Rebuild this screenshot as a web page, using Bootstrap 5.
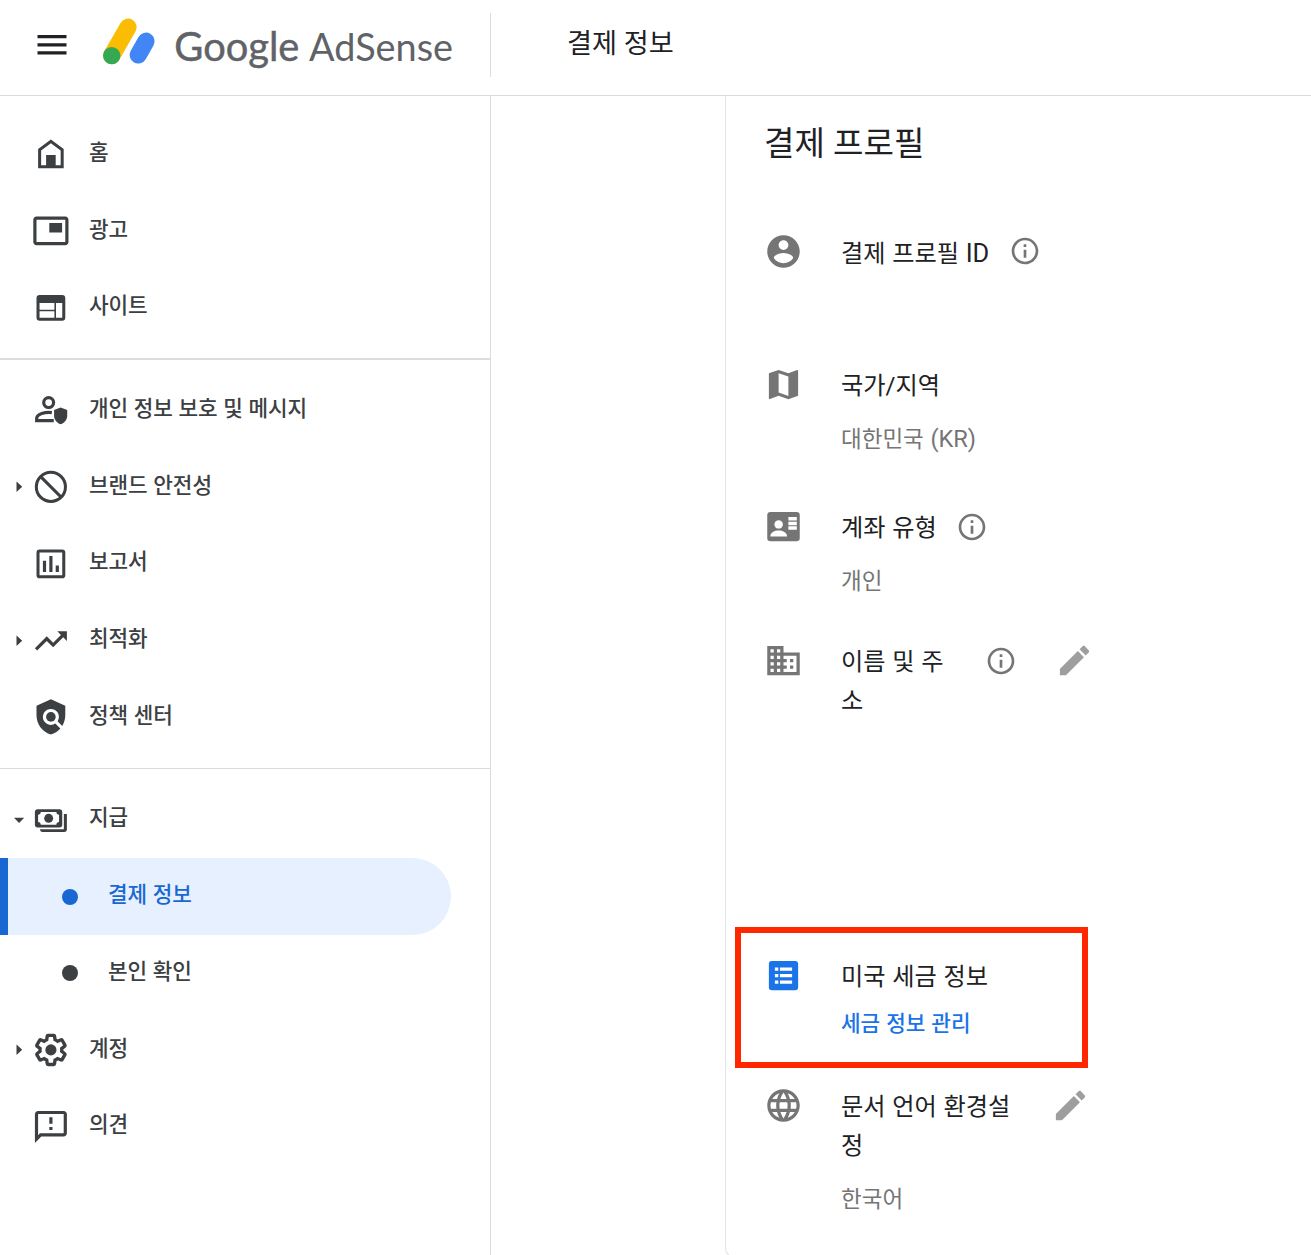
<!DOCTYPE html>
<html lang="ko">
<head>
<meta charset="utf-8">
<meta name="viewport" content="width=device-width, initial-scale=1">
<title>Google AdSense</title>
<link href="https://cdn.jsdelivr.net/npm/bootstrap@5.3.0/dist/css/bootstrap.min.css" rel="stylesheet">
<style>
body{font-family:Roboto,"Noto Sans CJK KR",sans-serif;color:#202124;background:#fff;height:1255px;overflow:hidden}
svg{display:block;flex:none}
.topbar{height:96px;border-bottom:1px solid #dadce0}
.brandbox{width:491px;height:64px;margin-top:13px;border-right:1px solid #dadce0}
.burger{margin:22px 0 0 37px}
.logo{margin:0 0 0 34px}
.page-name{font-size:27.2px;line-height:40px;margin:24px 0 0 76px}
.side{width:491px;height:1159px;border-right:1px solid #dadce0;padding-top:19.9px}
.side-link{height:76.8px;color:#3c4043;font-size:21.3px;line-height:32px;font-weight:500;word-spacing:.3px;padding-left:15px;text-decoration:none}
.side-link .caret{width:8px;height:12px;margin-right:8px}
.side-link svg.ico{width:38.4px;height:38.4px;margin-right:19.5px;transform:translate(.7px,-.3px)}
.side-link span{padding-bottom:3px}
.rule{height:1.6px;background:#dadce0;margin:12.1px 0 12px}
.rule-b{height:1px;background:#dadce0;margin:12px 0 12.4px}
.sub{padding-left:62px;width:451px}
.sub i{width:16px;height:16px;border-radius:50%;background:currentColor;margin-right:30px}
.sub.current{background:#e6f0fe;color:#1967d2;border-left:8px solid #1967d2;border-radius:0 38.4px 38.4px 0;padding-left:54px}
.gutter{width:234px}
.panel{border-left:1px solid #e4e5e8;border-bottom:1px solid #e4e5e8;border-bottom-left-radius:10px;height:1162px;padding:24px 0 0 38px}
.panel h1{font-size:33.1px;line-height:48px;font-weight:400;margin:0 0 64px}
.entry{height:133px;color:#757575;position:relative}
.entry>svg{width:39px;height:39px}
.entry .words{margin-left:38px;padding-top:2px}
.entry .lbl{font-size:24.2px;line-height:39px;color:#202124;word-break:break-all;word-spacing:.7px}
.entry .val{font-size:22.5px;line-height:32px;margin-top:16.5px;word-spacing:1px}
.entry .latin{font-size:1.05em}
.entry .act{font-size:21.3px;line-height:32px;font-weight:500;color:#1a73e8;text-decoration:none;display:block;margin-top:11px;word-spacing:.7px}
.entry svg.info{width:32px;height:32px;margin:4px 0 0 19.500px}
.entry:first-of-type svg.info{margin-top:3px}
.entry svg.pen{color:#9e9e9e;margin-left:38px}
.h-country{height:142px}.h-type{height:134px}.h-name{height:315px}.h-tax{height:130px}
.entry .w-name{width:112px}.w-lang{width:172px}
.entry .w-name-gap{margin-right:12.500px}
.h-tax>svg{color:#1a73e8}
.marker{position:absolute;left:-29px;top:-29px;width:353px;height:141px;border:6px solid #ff2600}
</style>
<script src="https://cdn.jsdelivr.net/npm/bootstrap@5.3.0/dist/js/bootstrap.bundle.min.js"></script>
</head>
<body>
<header class="topbar d-flex align-items-start">
  <div class="brandbox d-flex align-items-start">
    <svg class="burger" width="30" height="20" viewBox="0 0 30 20"><path d="M.5 0h29v3.200H.5zM.5 8.200h29v3.200H.5zM.5 16.200h29v3.200H.5z" fill="#202124"/></svg>
    <svg class="logo" width="356" height="64" viewBox="101 13 356 64">
      <path d="M128 27.200L111.700 55.600" stroke="#fbbc04" stroke-width="17.200" stroke-linecap="round"/>
      <path d="M146 41.200L138.200 55" stroke="#4285f4" stroke-width="17.200" stroke-linecap="round"/>
      <circle cx="111.700" cy="55.600" r="8.700" fill="#34a853"/>
      <g font-family="Lato, sans-serif" fill="#5f6368">
        <text x="174.300" y="60.500" font-size="41" textLength="125" lengthAdjust="spacingAndGlyphs" stroke="#5f6368" stroke-width=".5">Google</text>
        <text x="309" y="60.500" font-size="38.500" textLength="144" lengthAdjust="spacingAndGlyphs">AdSense</text>
      </g>
    </svg>
  </div>
  <div class="page-name">결제 정보</div>
</header>
<div class="d-flex">
  <nav class="side flex-shrink-0">
    <a class="side-link d-flex align-items-center"><b class="caret"></b><svg class="ico" viewBox="0 0 24 24" fill="currentColor"><path fill-rule="evenodd" d="M4 21V9l8-6 8 6v12zM5.900 19.100h12.200V9.900L12 5.400 5.900 9.900z"/><path d="M9 12.700h6v7H9z"/></svg><span>홈</span></a>
    <a class="side-link d-flex align-items-center"><b class="caret"></b><svg class="ico" viewBox="0 0 24 24" fill="currentColor"><path d="M19 7h-8v6h8V7zm2-4H3c-1.100 0-2 .9-2 2v14c0 1.100.9 1.980 2 1.980h18c1.100 0 2-.88 2-1.980V5c0-1.100-.9-2-2-2zm0 16.010H3V4.980h18v14.030z"/></svg><span>광고</span></a>
    <a class="side-link d-flex align-items-center"><b class="caret"></b><svg class="ico" viewBox="0 0 24 24" fill="currentColor"><path fill-rule="evenodd" d="M5 4h14a2 2 0 0 1 2 2v12a2 2 0 0 1-2 2H5a2 2 0 0 1-2-2V6a2 2 0 0 1 2-2zM4.900 9v4.200h9.300V9zM4.900 14.100v4.100h9.300v-4.100zM15.200 9v9.200h3.900V9z"/></svg><span>사이트</span></a>
    <div class="rule"></div>
    <a class="side-link d-flex align-items-center"><b class="caret"></b><svg class="ico" viewBox="0 0 24 24" fill="currentColor"><circle cx="10.600" cy="7.400" r="3.100" fill="none" stroke="currentColor" stroke-width="2"/><path d="M12.600 13.700c-4.200-.5-9.500.9-9.500 3.700v1.300h10.700" fill="none" stroke="currentColor" stroke-width="2"/><path d="M18.100 10.500l4.100 1.600v3.500c0 2.400-1.700 4.600-4.100 5.300-2.400-.7-4.100-2.900-4.100-5.300v-3.500z"/></svg><span>개인 정보 보호 및 메시지</span></a>
    <a class="side-link d-flex align-items-center"><svg class="caret" viewBox="0 0 8 12"><path d="M1.500.5v10.500L7.200 5.800z" fill="currentColor"/></svg><svg class="ico" viewBox="0 0 24 24" fill="none" stroke="currentColor" stroke-width="1.900"><circle cx="12" cy="12" r="9.100"/><path d="M5.600 5.600l12.800 12.800"/></svg><span>브랜드 안전성</span></a>
    <a class="side-link d-flex align-items-center"><b class="caret"></b><svg class="ico" viewBox="0 0 24 24" fill="currentColor"><rect x="3.950" y="3.950" width="16.100" height="16.100" rx="1" fill="none" stroke="currentColor" stroke-width="1.900"/><path d="M7 10h2v7H7zM11 7h2v10h-2zM15 13h2v4h-2z"/></svg><span>보고서</span></a>
    <a class="side-link d-flex align-items-center"><svg class="caret" viewBox="0 0 8 12"><path d="M1.500.5v10.500L7.200 5.800z" fill="currentColor"/></svg><svg class="ico" viewBox="0 0 24 24" fill="currentColor"><path d="M16 6l2.290 2.290-4.880 4.880-4-4L2 16.590 3.410 18l6-6 4 4 6.300-6.290L22 12V6z"/></svg><span>최적화</span></a>
    <a class="side-link d-flex align-items-center"><b class="caret"></b><svg class="ico" viewBox="0 0 24 24" fill="currentColor"><path d="M21 5l-9-4-9 4v6c0 5.550 3.840 10.740 9 12 2.300-.56 4.330-1.900 5.880-3.710l-3.120-3.120c-1.940 1.290-4.580 1.070-6.290-.64-1.950-1.950-1.950-5.120 0-7.070 1.950-1.950 5.120-1.950 7.070 0 1.710 1.710 1.920 4.350.64 6.290l2.900 2.900C20.290 15.690 21 13.380 21 11V5z"/><circle cx="12" cy="12" r="3"/></svg><span>정책 센터</span></a>
    <div class="rule-b"></div>
    <a class="side-link d-flex align-items-center"><svg class="caret overflow-visible" viewBox="0 0 8 12"><path d="M-1 3.800h10.200L4.100 8.900z" fill="currentColor"/></svg><svg class="ico" viewBox="0 0 24 24" fill="currentColor"><path fill-rule="evenodd" d="M3.600 5.300h13.900c.9 0 1.600.7 1.600 1.600v8.300c0 .9-.7 1.600-1.600 1.600H3.600c-.9 0-1.600-.7-1.600-1.600V6.900c0-.9.7-1.600 1.600-1.600zM5.700 7.100c0 1-.8 1.700-1.700 1.700v4.500c1 0 1.700.8 1.700 1.700h9.700c0-1 .8-1.700 1.700-1.700V8.800c-1 0-1.700-.8-1.700-1.700z"/><circle cx="10.600" cy="11" r="2.800"/><path d="M20.100 8.300H22v9.700c0 .9-.7 1.600-1.600 1.600H6.700c-.9 0-1.500-.7-1.500-1.700h14.900z"/></svg><span>지급</span></a>
    <a class="side-link sub current d-flex align-items-center"><i></i><span>결제 정보</span></a>
    <a class="side-link sub d-flex align-items-center"><i></i><span>본인 확인</span></a>
    <a class="side-link d-flex align-items-center"><svg class="caret" viewBox="0 0 8 12"><path d="M1.500.5v10.500L7.200 5.800z" fill="currentColor"/></svg><svg class="ico" viewBox="0 0 24 24" fill="currentColor"><path transform="translate(12 12) scale(.91) translate(-12 -12)" fill="none" stroke="currentColor" stroke-width="2.300" d="M19.430 12.980c.04-.32.07-.64.07-.98 0-.34-.03-.66-.07-.98l2.110-1.650c.19-.15.24-.42.12-.64l-2-3.460c-.09-.16-.26-.25-.44-.25-.06 0-.12.01-.17.03l-2.490 1c-.52-.4-1.080-.73-1.690-.98l-.38-2.650C14.460 2.180 14.250 2 14 2h-4c-.25 0-.46.18-.49.42l-.38 2.650c-.61.25-1.170.59-1.690.98l-2.490-1c-.06-.02-.12-.03-.18-.03-.17 0-.34.09-.43.25l-2 3.460c-.13.22-.07.49.12.64l2.110 1.650c-.04.32-.07.65-.07.98 0 .33.03.66.07.98l-2.110 1.650c-.19.15-.24.42-.12.64l2 3.460c.09.16.26.25.44.25.06 0 .12-.01.17-.03l2.490-1c.52.4 1.080.73 1.690.98l.38 2.650c.03.24.24.42.49.42h4c.25 0 .46-.18.49-.42l.38-2.650c.61-.25 1.170-.59 1.690-.98l2.490 1c.06.02.12.03.18.03.17 0 .34-.09.43-.25l2-3.460c.12-.22.07-.49-.12-.64z"/><circle cx="12" cy="12" r="3.500"/></svg><span>계정</span></a>
    <a class="side-link d-flex align-items-center"><b class="caret"></b><svg class="ico" viewBox="0 0 24 24" fill="currentColor"><path d="M20 2H4c-1.100 0-1.990.9-1.990 2L2 22l4-4h14c1.100 0 2-.9 2-2V4c0-1.100-.9-2-2-2zm0 14H5.170l-.59.59-.58.58V4h16v12zm-9-4h2v2h-2zm0-6h2v4h-2z"/></svg><span>의견</span></a>
  </nav>
  <div class="gutter flex-shrink-0"></div>
  <main class="panel flex-grow-1">
    <h1>결제 프로필</h1>
    <section class="entry d-flex align-items-start">
      <svg viewBox="0 0 24 24" fill="currentColor"><path d="M12 2C6.480 2 2 6.480 2 12s4.480 10 10 10 10-4.480 10-10S17.520 2 12 2zm0 3c1.660 0 3 1.340 3 3s-1.340 3-3 3-3-1.340-3-3 1.340-3 3-3zm0 14.200c-2.500 0-4.710-1.280-6-3.220.03-1.990 4-3.080 6-3.080 1.990 0 5.970 1.090 6 3.080-1.290 1.940-3.500 3.220-6 3.220z"/></svg>
      <div class="words"><div class="lbl">결제 프로필 <span class="latin">ID</span></div></div>
      <svg class="info" viewBox="0 0 24 24" fill="currentColor"><path d="M11 7h2v2h-2zm0 4h2v6h-2zm1-9C6.480 2 2 6.480 2 12s4.480 10 10 10 10-4.480 10-10S17.520 2 12 2zm0 18c-4.410 0-8-3.590-8-8s3.590-8 8-8 8 3.590 8 8-3.590 8-8 8z"/></svg>
    </section>
    <section class="entry h-country d-flex align-items-start">
      <svg viewBox="0 0 24 24" fill="currentColor"><path d="M20.500 3l-.16.03L15 5.100 9 3 3.360 4.900c-.21.07-.36.25-.36.48V20.500c0 .28.22.5.5.5l.16-.03L9 18.900l6 2.100 5.640-1.900c.21-.07.36-.25.36-.48V3.500c0-.28-.22-.5-.5-.5zM15 19l-6-2.110V5l6 2.110V19z"/></svg>
      <div class="words"><div class="lbl">국가/지역</div><div class="val">대한민국 <span class="latin">(KR)</span></div></div>
    </section>
    <section class="entry h-type d-flex align-items-start">
      <svg viewBox="0 0 24 24" fill="currentColor"><rect x="2" y="3" width="20" height="18" rx="2"/><g fill="#fff"><circle cx="9" cy="10.700" r="2.600"/><path d="M3.900 18.100c0-2.400 2.700-3.600 5.100-3.600s5.200 1.200 5.200 3.600zM15 6.200h5.200v2.100H15zM15 9.100h5.200v2.100H15zM15 11.900h5.200V14H15z"/></g></svg>
      <div class="words"><div class="lbl">계좌 유형</div><div class="val">개인</div></div>
      <svg class="info" viewBox="0 0 24 24" fill="currentColor"><path d="M11 7h2v2h-2zm0 4h2v6h-2zm1-9C6.480 2 2 6.480 2 12s4.480 10 10 10 10-4.480 10-10S17.520 2 12 2zm0 18c-4.410 0-8-3.590-8-8s3.590-8 8-8 8 3.590 8 8-3.590 8-8 8z"/></svg>
    </section>
    <section class="entry h-name d-flex align-items-start">
      <svg viewBox="0 0 24 24" fill="currentColor"><path d="M12 7V3H2v18h20V7H12zM6 19H4v-2h2v2zm0-4H4v-2h2v2zm0-4H4V9h2v2zm0-4H4V5h2v2zm4 12H8v-2h2v2zm0-4H8v-2h2v2zm0-4H8V9h2v2zm0-4H8V5h2v2zm10 12h-8v-2h2v-2h-2v-2h2v-2h-2V9h8v10zm-2-8h-2v2h2v-2zm0 4h-2v2h2v-2z"/></svg>
      <div class="words w-name-gap"><div class="lbl w-name">이름 및 주소</div></div>
      <svg class="info" viewBox="0 0 24 24" fill="currentColor"><path d="M11 7h2v2h-2zm0 4h2v6h-2zm1-9C6.480 2 2 6.480 2 12s4.480 10 10 10 10-4.480 10-10S17.520 2 12 2zm0 18c-4.410 0-8-3.590-8-8s3.590-8 8-8 8 3.590 8 8-3.590 8-8 8z"/></svg>
      <svg class="pen" viewBox="0 0 24 24" fill="currentColor"><path d="M3 17.250V21h3.750L17.810 9.940l-3.750-3.750L3 17.250zM20.710 7.040c.39-.39.39-1.020 0-1.410l-2.340-2.340c-.39-.39-1.020-.39-1.410 0l-1.830 1.830 3.750 3.750 1.830-1.830z"/></svg>
    </section>
    <section class="entry h-tax d-flex align-items-start">
      <svg viewBox="0 0 24 24" fill="currentColor"><rect x="3" y="3" width="18" height="18" rx="1.800"/><path fill="#fff" d="M6.700 7h2.100v2H6.700zM9.800 7h7.500v2H9.800zM6.700 11h2.100v2H6.700zM9.800 11h7.500v2H9.800zM6.700 15h2.100v2H6.700zM9.800 15h7.500v2H9.800z"/></svg>
      <div class="words"><div class="lbl">미국 세금 정보</div><a class="act">세금 정보 관리</a></div>
      <div class="marker"></div>
    </section>
    <section class="entry d-flex align-items-start">
      <svg viewBox="0 0 24 24" fill="currentColor"><path d="M11.990 2C6.470 2 2 6.480 2 12s4.470 10 9.990 10C17.520 22 22 17.520 22 12S17.520 2 11.990 2zm6.930 6h-2.950c-.32-1.250-.78-2.450-1.380-3.560 1.840.63 3.370 1.910 4.330 3.560zM12 4.040c.83 1.200 1.480 2.530 1.910 3.960h-3.820c.43-1.430 1.080-2.760 1.910-3.960zM4.260 14C4.100 13.360 4 12.690 4 12s.1-1.360.26-2h3.380c-.08.66-.14 1.320-.14 2 0 .68.06 1.340.14 2H4.260zm.82 2h2.950c.32 1.250.78 2.450 1.380 3.560-1.840-.63-3.370-1.900-4.330-3.560zm2.950-8H5.080c.96-1.660 2.490-2.930 4.330-3.560C8.810 5.550 8.350 6.750 8.030 8zM12 19.960c-.83-1.200-1.480-2.530-1.910-3.960h3.820c-.43 1.430-1.080 2.760-1.910 3.960zM14.340 14H9.660c-.09-.66-.16-1.320-.16-2 0-.68.07-1.350.16-2h4.680c.09.65.16 1.320.16 2 0 .68-.07 1.340-.16 2zm.25 5.560c.6-1.110 1.060-2.310 1.380-3.560h2.950c-.96 1.650-2.490 2.930-4.330 3.560zM16.360 14c.08-.66.14-1.320.14-2 0-.68-.06-1.340-.14-2h3.380c.16.64.26 1.310.26 2s-.1 1.360-.26 2h-3.380z"/></svg>
      <div class="words"><div class="lbl w-lang">문서 언어 환경설정</div><div class="val">한국어</div></div>
      <svg class="pen" viewBox="0 0 24 24" fill="currentColor"><path d="M3 17.250V21h3.750L17.810 9.940l-3.750-3.750L3 17.250zM20.710 7.040c.39-.39.39-1.020 0-1.410l-2.340-2.340c-.39-.39-1.020-.39-1.410 0l-1.830 1.830 3.750 3.750 1.830-1.830z"/></svg>
    </section>
  </main>
</div>
</body>
</html>
